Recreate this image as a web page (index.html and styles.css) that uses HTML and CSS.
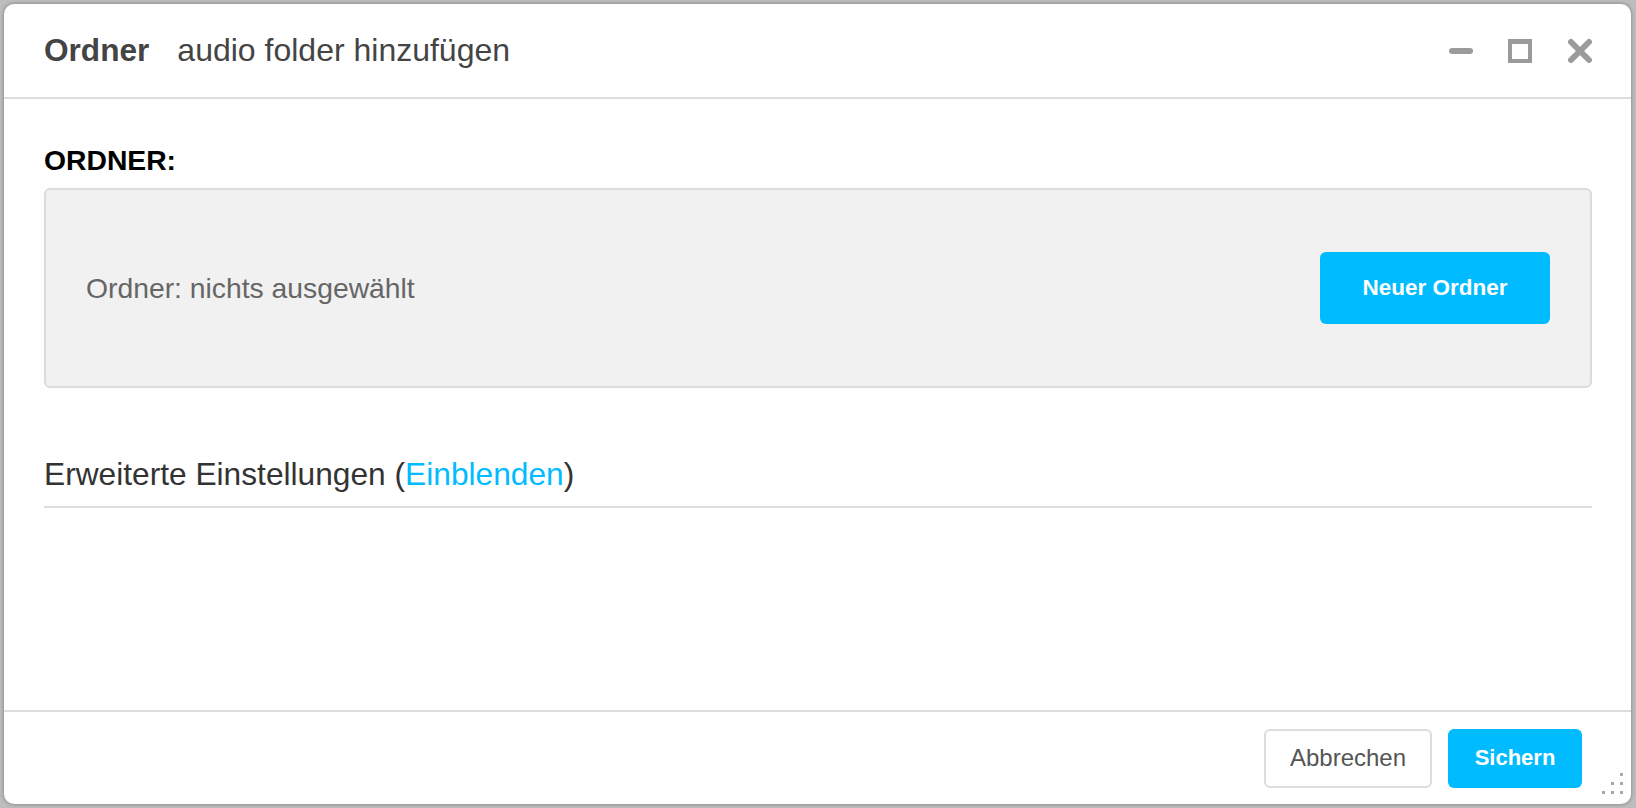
FILE: index.html
```html
<!DOCTYPE html>
<html lang="de">
<head>
<meta charset="utf-8">
<title>Ordner</title>
<link rel="stylesheet" href="styles.css">
</head>
<body>
<div class="dialog">
  <header class="dlg-header">
    <h1 class="title"><span class="title-main">Ordner</span><span class="title-sub">audio folder hinzufügen</span></h1>
    <div class="controls">
      <svg class="ctl" width="24" height="24" viewBox="0 0 24 24"><rect x="0" y="9" width="24" height="6" rx="3" fill="#9b9b9b"/></svg>
      <svg class="ctl" width="24" height="24" viewBox="0 0 24 24"><path fill="#9b9b9b" fill-rule="evenodd" d="M0 0H24V24H0Z M4 5V20H20V5Z"/></svg>
      <svg class="ctl" width="26" height="26" viewBox="0 0 26 26"><path d="M4 4L22 22M22 4L4 22" stroke="#9b9b9b" stroke-width="6" stroke-linecap="round"/></svg>
    </div>
  </header>
  <main class="dlg-body">
    <div class="label">ORDNER:</div>
    <div class="folder-box">
      <span class="folder-text">Ordner: nichts ausgewählt</span>
      <button class="btn btn-primary btn-big">Neuer Ordner</button>
    </div>
    <div class="advanced">Erweiterte Einstellungen (<a class="link" href="#">Einblenden</a>)</div>
  </main>
  <footer class="dlg-footer">
    <button class="btn btn-default">Abbrechen</button>
    <button class="btn btn-primary btn-small">Sichern</button>
  </footer>
  <div class="resize">
    <span class="dot d1"></span><span class="dot d2"></span><span class="dot d3"></span><span class="dot d4"></span><span class="dot d5"></span><span class="dot d6"></span>
  </div>
</div>
</body>
</html>
```
FILE: styles.css
```css
html, body {
  margin: 0;
  padding: 0;
}
body {
  background: #bdbdbd;
  width: 1636px;
  height: 808px;
  overflow: hidden;
  font-family: "Liberation Sans", Arial, sans-serif;
}
.dialog {
  position: relative;
  margin: 4px 0 0 4px;
  width: 1627px;
  height: 800px;
  background: #fff;
  border-radius: 10px;
  box-shadow: 0 0 4px rgba(0,0,0,0.35);
  display: flex;
  flex-direction: column;
  box-sizing: border-box;
}
.dlg-header {
  height: 95px;
  box-sizing: border-box;
  border-bottom: 2px solid #dddddd;
  display: flex;
  align-items: center;
  justify-content: space-between;
  padding: 0 38px 0 40px;
}
.title {
  margin: -2px 0 0 0;
  font-size: 32px;
  line-height: 36px;
  font-weight: normal;
  color: #444;
  display: flex;
  gap: 28px;
}
.title-main {
  font-weight: bold;
  font-size: 31.6px;
}
.controls {
  display: flex;
  align-items: center;
  gap: 35px;
}
.ctl { display: block; }
.dlg-body {
  flex: 1;
  padding: 45px 39px 0 40px;
}
.label {
  font-size: 28.3px;
  line-height: 32px;
  font-weight: bold;
  color: #000;
  margin-bottom: 12px;
}
.folder-box {
  height: 200px;
  box-sizing: border-box;
  background: #f1f1f1;
  border: 2px solid #dcdcdc;
  border-radius: 6px;
  display: flex;
  align-items: center;
  justify-content: space-between;
  padding: 0 40px;
}
.folder-text {
  font-size: 28.3px;
  color: #666;
}
.btn {
  font-family: "Liberation Sans", Arial, sans-serif;
  border-radius: 6px;
  cursor: pointer;
  box-sizing: border-box;
}
.btn-primary {
  background: #00bbff;
  border: 0;
  color: #fff;
  font-weight: bold;
}
.btn-big {
  width: 230px;
  height: 72px;
  font-size: 22.5px;
}
.advanced {
  margin-top: 68px;
  font-size: 31.7px;
  line-height: 36px;
  color: #333;
  padding-bottom: 14px;
  border-bottom: 2px solid #dddddd;
}
.link {
  color: #00bbff;
  text-decoration: none;
}
.dlg-footer {
  height: 94px;
  box-sizing: border-box;
  border-top: 2px solid #dddddd;
  display: flex;
  align-items: center;
  justify-content: flex-end;
  gap: 16px;
  padding: 0 49px 0 0;
}
.btn-default {
  width: 168px;
  height: 59px;
  background: #fff;
  border: 2px solid #dddddd;
  color: #555;
  font-size: 24px;
}
.btn-small {
  width: 134px;
  height: 59px;
  font-size: 22px;
}
.resize {
  position: absolute;
  right: 8px;
  bottom: 10px;
  width: 21px;
  height: 21px;
}
.dot {
  position: absolute;
  width: 3px;
  height: 3px;
  background: #aaa;
}
.d1 { right: 0; top: 0; }
.d2 { right: 9px; top: 9px; }
.d3 { right: 0; top: 9px; }
.d4 { right: 18px; top: 18px; }
.d5 { right: 9px; top: 18px; }
.d6 { right: 0; top: 18px; }
```
